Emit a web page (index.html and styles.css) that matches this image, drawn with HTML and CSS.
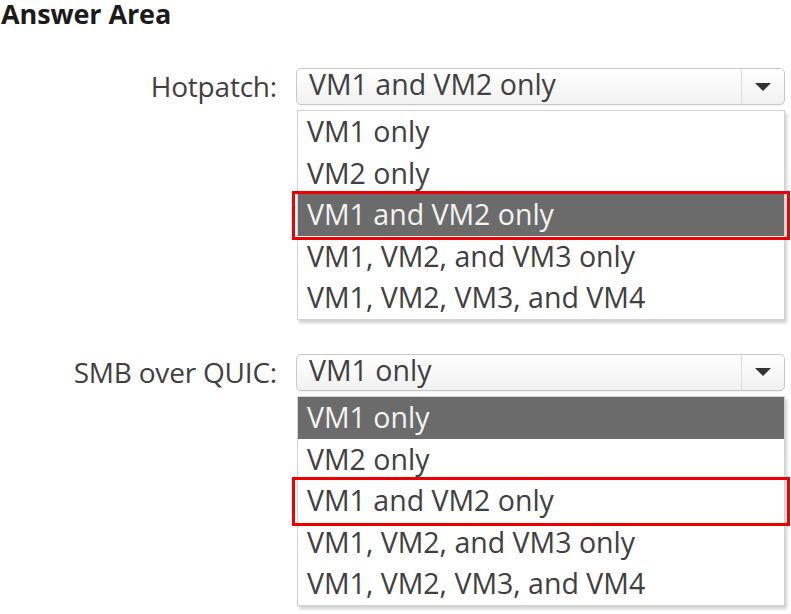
FILE: index.html
```html
<!DOCTYPE html>
<html lang="en">
<head>
<meta charset="utf-8">
<title>Answer Area</title>
<link rel="stylesheet" href="styles.css">
</head>
<body>
<main class="page">
  <h1 class="title">Answer Area</h1>
  <div class="form">
    <div class="field">
      <div class="label">Hotpatch:</div>
      <div class="control">
        <div class="select">
          <span class="value">VM1 and VM2 only</span>
          <span class="btn"><svg width="18" height="10" viewBox="0 0 18 10"><path d="M1 1 H17 L9 9 Z" fill="#333"/></svg></span>
        </div>
        <ul class="list">
          <li>VM1 only</li>
          <li>VM2 only</li>
          <li class="sel answer">VM1 and VM2 only</li>
          <li>VM1, VM2, and VM3 only</li>
          <li>VM1, VM2, VM3, and VM4</li>
        </ul>
      </div>
    </div>
    <div class="field">
      <div class="label">SMB over QUIC:</div>
      <div class="control">
        <div class="select">
          <span class="value">VM1 only</span>
          <span class="btn"><svg width="18" height="10" viewBox="0 0 18 10"><path d="M1 1 H17 L9 9 Z" fill="#333"/></svg></span>
        </div>
        <ul class="list">
          <li class="sel">VM1 only</li>
          <li>VM2 only</li>
          <li class="answer">VM1 and VM2 only</li>
          <li>VM1, VM2, and VM3 only</li>
          <li>VM1, VM2, VM3, and VM4</li>
        </ul>
      </div>
    </div>
  </div>
</main>
</body>
</html>
```

FILE: styles.css
```css
html, body {
  margin: 0;
  padding: 0;
  background: #ffffff;
}
body {
  font-family: "Open Sans", "Noto Sans", "Liberation Sans", sans-serif;
  color: #404040;
}
.page {
  width: 791px;
  height: 614px;
  overflow: hidden;
}
.title {
  margin: 0;
  padding: 2px 0 0 1px;
  font-size: 27px;
  line-height: 23px;
  height: 25px;
  box-sizing: border-box;
  font-weight: 700;
  color: #1b1b1b;
  letter-spacing: -0.1px;
}
.form {
  display: flex;
  flex-direction: column;
  gap: 34px;
  margin-top: 43px;
}
.field {
  display: grid;
  grid-template-columns: 296px 489px;
  align-items: start;
}
.label {
  text-align: right;
  padding-right: 19px;
  font-size: 28px;
  line-height: 37px;
  color: #404040;
  letter-spacing: -0.2px;
  white-space: nowrap;
}
.control {
  display: flex;
  flex-direction: column;
  gap: 5px;
}
.select {
  display: flex;
  height: 37px;
  box-sizing: border-box;
  border: 1px solid #c9c9c9;
  border-radius: 5px;
  background: linear-gradient(#ffffff, #f1f1f1);
  box-shadow: 0 1px 1px rgba(0,0,0,0.06);
}
.value {
  flex: 1;
  padding-left: 12px;
  font-size: 28.5px;
  line-height: 31px;
  color: #404040;
  white-space: nowrap;
}
.btn {
  width: 42px;
  border-left: 1px solid #dcdcdc;
  display: flex;
  align-items: center;
  justify-content: center;
}
.list {
  list-style: none;
  margin: 0 0 0 1px;
  padding: 0;
  border: 1px solid #d2d2d2;
  background: #fff;
  box-shadow: 2px 3px 3px rgba(0,0,0,0.18);
}
.list li {
  position: relative;
  height: 41.6px;
  line-height: 40px;
  padding-left: 9px;
  font-size: 28.5px;
  color: #404040;
  white-space: nowrap;
}
.list li.sel {
  background: #6b6b6b;
  color: #f4f4f4;
}
.list li.answer::after {
  content: "";
  position: absolute;
  top: -3px;
  bottom: -4px;
  left: -6px;
  right: -6px;
  border: 3px solid #ee0000;
}
```
